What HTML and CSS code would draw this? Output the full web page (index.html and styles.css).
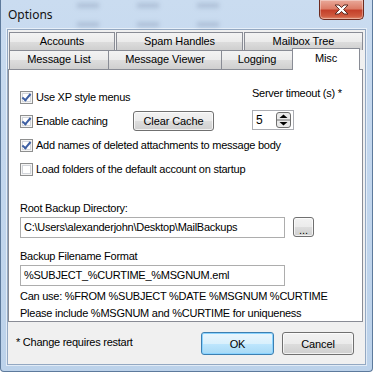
FILE: index.html
```html
<!DOCTYPE html>
<html lang="en">
<head>
    <meta charset="UTF-8">
    <title>Options</title>
    <link rel="stylesheet" href="styles.css">
</head>
<body>
    <div class="window">
        <div class="titlebar">
            <span class="title">Options</span>
            <!-- lo que se ve borroso detras del vidrio -->
            <div class="backdrop" aria-hidden="true">
                <div class="backdrop-row"><span class="blob"></span><span class="blob"></span><span class="blob"></span></div>
                <div class="backdrop-row"><span class="blob"></span><span class="blob"></span><span class="blob"></span></div>
            </div>
            <button class="btn-close" aria-label="Close">
                <svg width="17" height="11" viewBox="0 0 17 11">
                    <path d="M2 1 H6 L8.5 3.6 L11 1 H15 L10.6 5.5 L15 10 H11 L8.5 7.4 L6 10 H2 L6.4 5.5 Z" fill="#fff" stroke="#5a2a22" stroke-width="1" stroke-linejoin="round"/>
                </svg>
            </button>
        </div>

        <div class="client">
            <div class="tab-row tab-row-top">
                <div class="tab" style="width:106px">Accounts</div>
                <div class="tab" style="width:127px">Spam Handles</div>
                <div class="tab tab-last" style="width:119px">Mailbox Tree</div>
            </div>
            <div class="tab-row">
                <div class="tab" style="width:100px">Message List</div>
                <div class="tab" style="width:114px">Message Viewer</div>
                <div class="tab" style="width:72px">Logging</div>
                <div class="tab tab-active" style="width:68px">Misc</div>
            </div>

            <div class="panel">
                <div class="options-grid">
                    <label class="check">
                        <span class="box checked"></span>
                        <span>Use XP style menus</span>
                    </label>
                    <div class="timeout-label">Server timeout (s) *</div>

                    <div class="cache-row">
                        <label class="check">
                            <span class="box checked"></span>
                            <span>Enable caching</span>
                        </label>
                        <button class="btn btn-clear">Clear Cache</button>
                    </div>
                    <div class="spinner">
                        <span class="spin-value">5</span>
                        <svg class="spin-arrows" width="15" height="16" viewBox="0 0 15 16">
                            <rect x="0.5" y="0.5" width="14" height="15" rx="2.5" fill="#e9e9e9" stroke="#6f6f6f"/>
                            <line x1="1" y1="8" x2="14" y2="8" stroke="#6f6f6f"/>
                            <path d="M3.5 6 L7.5 2.5 L11.5 6 Z" fill="#000"/>
                            <path d="M3.5 10 L7.5 13.5 L11.5 10 Z" fill="#000"/>
                        </svg>
                    </div>

                    <label class="check wide">
                        <span class="box checked"></span>
                        <span>Add names of deleted attachments to message body</span>
                    </label>
                    <label class="check wide">
                        <span class="box"></span>
                        <span>Load folders of the default account on startup</span>
                    </label>
                </div>

                <div class="field-label label-root">Root Backup Directory:</div>
                <div class="field-row">
                    <div class="textbox">C:\Users\alexanderjohn\Desktop\MailBackups</div>
                    <button class="btn btn-browse">...</button>
                </div>

                <div class="field-label label-format">Backup Filename Format</div>
                <div class="textbox">%SUBJECT_%CURTIME_%MSGNUM.eml</div>

                <p class="hint">Can use: %FROM %SUBJECT %DATE %MSGNUM %CURTIME</p>
                <p class="hint">Please include %MSGNUM and %CURTIME for uniqueness</p>
            </div>

            <div class="footer">
                <span class="note">* Change requires restart</span>
                <button class="btn btn-ok">OK</button>
                <button class="btn btn-cancel">Cancel</button>
            </div>
        </div>
    </div>
</body>
</html>
```

FILE: styles.css
```css
body {
    margin: 0;
    font-family: "Liberation Sans", Arial, sans-serif;
    font-size: 11px;
    letter-spacing: -0.25px;
    color: #000;
}
.window {
    width: 373px;
    height: 372px;
    box-sizing: border-box;
    border: 1px solid #5d7a9c;
    border-top: none;
    border-radius: 0 0 4px 4px;
    background: linear-gradient(180deg, #cadcf0 0%, #c3d7ee 40%, #bcd2ea 100%);
    display: flex;
    flex-direction: column;
}
.titlebar {
    height: 29px;
    display: flex;
    align-items: flex-start;
    padding-left: 7px;
    padding-right: 8px;
}
.title {
    font-family: "Noto Sans", sans-serif;
    font-size: 12px;
    letter-spacing: 0;
    line-height: 16px;
    margin-top: 7px;
    color: #111;
}
.backdrop {
    flex: 1;
    padding: 3px 0 0 24px;
    display: flex;
    flex-direction: column;
    gap: 14px;
}
.backdrop-row {
    display: flex;
    gap: 38px;
}
.blob {
    width: 22px;
    height: 5px;
    background: rgba(80, 100, 130, 0.22);
    filter: blur(2px);
}
.btn-close {
    width: 45px;
    height: 20px;
    padding: 0;
    border: 1px solid #6d2a1e;
    border-top: none;
    border-radius: 0 0 5px 5px;
    background: linear-gradient(180deg, #e9a99a 0%, #dc7d68 45%, #c4402a 55%, #cf5a3f 85%, #e08a6d 100%);
    box-shadow: inset 0 0 0 1px rgba(255, 255, 255, 0.35);
    display: flex;
    justify-content: center;
    align-items: center;
}
.client {
    height: 336px;
    box-sizing: border-box;
    margin: 0 6px 6px 6px;
    border: 1px solid #93a8c2;
    box-shadow: 0 0 0 1px rgba(255, 255, 255, 0.55);
    background-color: #f0f0f0;
    padding-top: 2px;
}

/* pestañas */
.tab-row {
    display: flex;
    margin-left: 1px;
    height: 19px;
}
.tab-row-top {
    height: 18px;
}
.tab {
    box-sizing: border-box;
    border: 1px solid #898c95;
    border-bottom: none;
    background: linear-gradient(180deg, #f3f3f3 0%, #ebebeb 50%, #dddddd 51%, #cfcfcf 100%);
    text-align: center;
    line-height: 17px;
    letter-spacing: -0.1px;
    margin-right: -1px;
}
.tab-row-top .tab {
    margin-right: 1px;
}
.tab-active {
    position: relative;
    z-index: 1;
    height: 22px;
    margin-top: -2px;
    background: #fff;
    line-height: 19px;
}
.panel {
    height: 253px;
    box-sizing: border-box;
    margin-right: 2px;
    border: 1px solid #898c95;
    background: #fff;
    padding: 15px 0 0 11px;
}

/* opciones */
.options-grid {
    display: grid;
    grid-template-columns: 232px 1fr;
    grid-auto-rows: 24px;
    align-items: center;
}
.check {
    display: flex;
    align-items: center;
    gap: 3px;
}
.wide {
    grid-column: span 2;
}
.box {
    width: 13px;
    height: 13px;
    box-sizing: border-box;
    border: 1px solid #8e8f8f;
    background: #fff;
    box-shadow: inset 0 0 0 1px #f4f4f4, inset 0 0 0 2px #d2d5da;
    flex-shrink: 0;
    position: relative;
}
.box.checked::after {
    content: "";
    position: absolute;
    left: 3px;
    top: 0px;
    width: 3px;
    height: 7px;
    border: solid #3d5fa3;
    border-width: 0 2px 2px 0;
    transform: rotate(40deg);
}
.timeout-label {
    align-self: start;
    margin-top: 1px;
    line-height: 14px;
}
.cache-row {
    display: grid;
    grid-template-columns: 113px auto;
    align-items: center;
}
.spinner {
    align-self: start;
    margin-top: 1px;
    width: 42px;
    height: 20px;
    box-sizing: border-box;
    border: 1px solid #abadb3;
    display: flex;
    align-items: center;
    justify-content: space-between;
    padding: 0 2px 0 3px;
    font-size: 12px;
}
.btn {
    box-sizing: border-box;
    font-family: "Liberation Sans", Arial, sans-serif;
    font-size: 11px;
    letter-spacing: -0.1px;
    color: #000;
    padding: 0;
    border: 1px solid #707070;
    border-radius: 3px;
    background: linear-gradient(180deg, #f2f2f2 0%, #ebebeb 50%, #dddddd 51%, #cfcfcf 100%);
    box-shadow: inset 0 0 0 1px rgba(255, 255, 255, 0.7);
}
.btn-clear {
    width: 81px;
    height: 20px;
}

/* campos */
.field-label {
    line-height: 14px;
}
.label-root {
    margin-top: 20px;
}
.label-format {
    margin-top: 11px;
}
.field-row {
    display: flex;
    gap: 8px;
    margin-top: 2px;
}
.textbox {
    width: 265px;
    height: 21px;
    box-sizing: border-box;
    border: 1px solid #adadad;
    line-height: 19px;
    padding-left: 3px;
    background: #fff;
}
.label-format + .textbox {
    margin-top: 2px;
}
.btn-browse {
    width: 21px;
    height: 20px;
    line-height: 24px;
}
.hint {
    margin: 0;
    line-height: 17px;
}
.label-format + .textbox + .hint {
    margin-top: 2px;
}

.footer {
    display: flex;
    align-items: flex-start;
    padding: 10px 11px 0 8px;
    gap: 8px;
}
.note {
    flex: 1;
    line-height: 20px;
}
.btn-ok {
    width: 73px;
    height: 23px;
    border-color: #3c7fb1;
    background: linear-gradient(180deg, #eaf6fd 0%, #d9f0fc 50%, #bee6fd 51%, #a7d9f5 100%);
    box-shadow: inset 0 0 0 1px #8ad3ff;
}
.btn-cancel {
    width: 72px;
    height: 23px;
}
```
